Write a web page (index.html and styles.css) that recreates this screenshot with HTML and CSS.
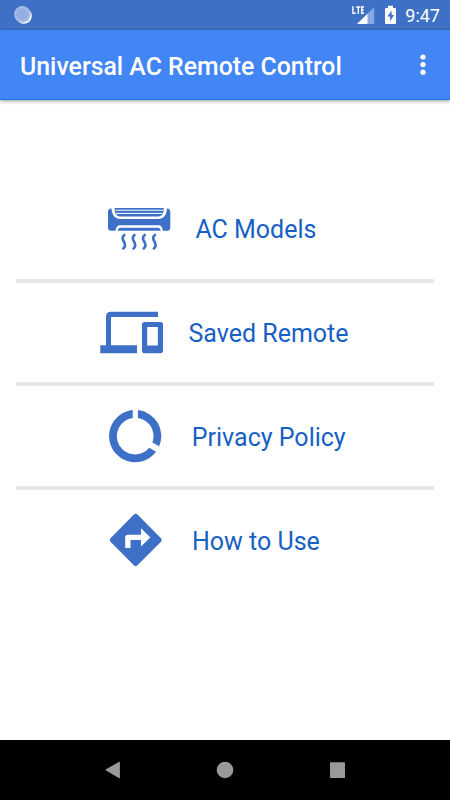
FILE: index.html
```html
<!DOCTYPE html>
<html lang="en">
<head>
<meta charset="utf-8">
<title>Universal AC Remote Control</title>
<link rel="stylesheet" href="styles.css">
</head>
<body>
<header class="status">
  <svg class="spinner" viewBox="0 0 20 20"><circle cx="10.8" cy="10.8" r="8" fill="#fff"/><circle cx="9.3" cy="9.3" r="8.3" fill="#92afe0"/><circle cx="9.3" cy="9.3" r="7" fill="none" stroke="#b9cbec" stroke-width="2" stroke-dasharray="1 1.1"/></svg>
  <div class="status-right">
    <svg class="signal" viewBox="350 3 26 24"><path d="M374.2 7v17h-17z" fill="#87a7df"/><path d="M367.5 13.7V24H357z" fill="#fff"/><path d="M352.9 6.3v7h3M356.2 7h4.2M358.3 7v7M364 7h-2.3v6.3h2.4M361.7 10h2" fill="none" stroke="#fff" stroke-width="1.4"/></svg>
    <svg class="battery" viewBox="384 4 13 21"><path d="M388 5.8h5V8h2q1 0 1 1v14q0 1-1 1h-9q-1 0-1-1V9q0-1 1-1h2z" fill="#fff"/><path d="M391.6 10.5l-4.2 6h2.7v4.700l4-6.200h-2.500z" fill="#3e70c6"/></svg>
    <span class="time">9:47</span>
  </div>
</header>
<div class="appbar">
  <h1 class="title">Universal AC Remote Control</h1>
  <svg class="more" viewBox="0 0 8 22"><circle cx="4" cy="3" r="2.6"/><circle cx="4" cy="10.6" r="2.6"/><circle cx="4" cy="18.2" r="2.6"/></svg>
</div>
<main class="menu">
  <div class="row row-models">
    <svg class="icon" viewBox="95 189 80 80">
      <path d="M108 212Q108 209 111.300 208.300Q112.500 219 119.500 219H159Q166 219 167.200 208.300Q170.300 209 170.300 212V227.500Q170.300 230.700 167 230.700H162.900Q162 225.300 158.500 225.300H120Q116.500 225.300 115.400 230.700H111.200Q108 230.700 108 227.500z"/>
      <path d="M117.700 230.700Q118 227.700 121 227.700H157.500Q160.300 227.700 160.700 230.700z"/>
      <path d="M114.600 208h49.100q0 8.400-5 8.400h-39.100q-5 0-5-8.400z"/>
      <path class="cut" d="M115.500 210.200H163M115.800 213.400H162.500"/>
      <path class="wave" d="M124.300 235q-3 2.400-.6 6.200q2.800 4.600-.4 7.200M134.500 235q-3 2.400-.6 6.200q2.800 4.600-.4 7.200M144.700 235q-3 2.400-.6 6.200q2.800 4.600-.4 7.200M154.900 235q-3 2.400-.6 6.200q2.800 4.600-.4 7.200"/>
    </svg>
    <span class="label">AC Models</span>
  </div>
  <div class="row row-saved">
    <svg class="icon" viewBox="95 292 80 80"><path fill-rule="evenodd" d="M111 311.700H158V317H111V345.300H137V353.300H100.300V345.300H106V316.700Q106 311.700 111 311.700zM144.500 322H160.300Q163 322 163 324.500V350.800Q163 353.300 160.300 353.300H144.500Q142 353.300 142 350.800V324.500Q142 322 144.500 322zM147.200 327V345.500H157.800V327z"/></svg>
    <span class="label">Saved Remote</span>
  </div>
  <div class="row row-privacy">
    <svg class="icon" viewBox="95 396 80 80"><path d="M132.700 410.100V418A18.300 18.300 0 1 0 149.300 447.700L156.100 451.700A26.100 26.100 0 1 1 132.700 410.100zM138 410.100A26.100 26.100 0 0 1 159.200 446.300L152.400 442.500A18.300 18.300 0 0 0 138 418z"/></svg>
    <span class="label">Privacy Policy</span>
  </div>
  <div class="row row-help">
    <svg class="icon" viewBox="95 500 80 80"><path fill-rule="evenodd" d="M137.500 514.500L161 538.200Q162.800 540 161 541.800L137.500 565.300Q135.700 567 133.900 565.300L110.500 541.800Q108.700 540 110.500 538.200L133.900 514.500Q135.700 513 137.500 514.500zM141 528.200V534.700H127.700Q125.200 534.700 125.200 537.200V548H130.500V540H141V546.600L150.300 537.400z"/></svg>
    <span class="label">How to Use</span>
  </div>
</main>
<nav class="nav">
  <svg viewBox="0 0 20 20"><path d="M16.900 2V18Q16.500 18.500 15.800 18L3 10.600Q2.200 10 3 9.300L15.800 2Q16.500 1.500 16.900 2z"/></svg>
  <svg viewBox="0 0 20 20"><circle cx="10" cy="10" r="8.300"/></svg>
  <svg viewBox="0 0 20 20"><rect x="2" y="2.200" width="15" height="15.800" rx=".8"/></svg>
</nav>
</body>
</html>
```

FILE: styles.css
```css
* { box-sizing: border-box; }
body {
  margin: 0;
  height: 800px;
  display: flex;
  flex-direction: column;
  background: #fff;
  font-family: Roboto, "Liberation Sans", sans-serif;
  overflow: hidden;
}
svg { display: block; flex: none; }
.status {
  height: 30px;
  flex: none;
  display: flex;
  align-items: center;
  justify-content: space-between;
  padding: 0 10px 0 13px;
  background: #3e70c6;
}
.spinner { width: 20px; height: 20px; }
.status-right { display: flex; align-items: center; }
.signal { width: 26px; height: 24px; margin-right: 8px; }
.battery { width: 13px; height: 21px; margin: 0 8px 1px 0; }
.time { color: #fff; font-size: 18px; line-height: 30px; padding-top: 1px; }
.appbar {
  height: 70px;
  flex: none;
  display: flex;
  align-items: center;
  justify-content: space-between;
  padding: 0 23.5px 0 20px;
  background: #4285f4;
  border-bottom: 1px solid #1976e4;
  box-shadow: 0 1px 4px rgba(0, 0, 0, .4);
}
.title {
  margin: 5px 0 0;
  color: #fff;
  font-size: 24.85px;
  font-weight: 500;
  line-height: 30px;
  white-space: nowrap;
}
.more { width: 8px; height: 22px; fill: #fff; }
.menu { flex: 1; padding: 78.75px 16px 0; }
.row {
  height: 103.75px;
  display: flex;
  align-items: center;
  padding-left: 79px;
  border-bottom: 4px solid #e7e7e6;
}
.row-help { border-bottom-color: transparent; }
.icon { width: 80px; height: 80px; fill: #3e70c8; }
.cut { stroke: #fff; stroke-width: 1; fill: none; }
.wave { stroke: #3e70c8; stroke-width: 2.6; stroke-linecap: round; fill: none; }
.label {
  color: #1760c4;
  font-size: 25px;
  line-height: 30px;
  margin-top: 3.5px;
  white-space: nowrap;
}
.row-models .label { margin-left: 20.4px; }
.row-saved .label { margin-left: 13.5px; }
.row-privacy .label { margin-left: 16.8px; }
.row-help .label { margin-left: 17px; }
.nav {
  height: 60px;
  flex: none;
  display: flex;
  align-items: center;
  justify-content: center;
  gap: 92.5px;
  background: #000;
}
.nav svg { width: 20px; height: 20px; fill: #999; }
```
